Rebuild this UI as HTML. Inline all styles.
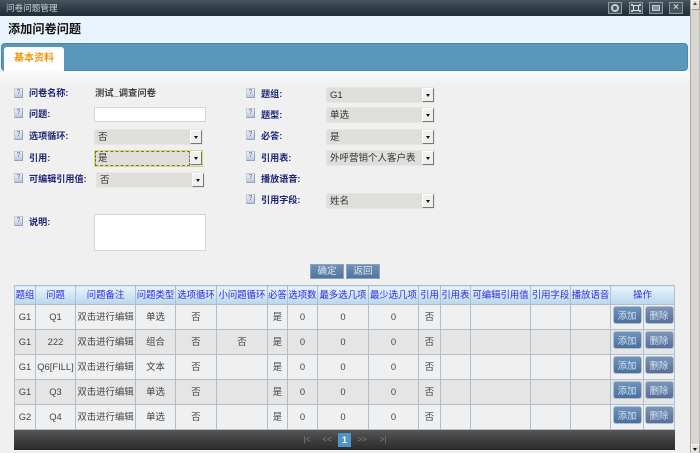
<!DOCTYPE html>
<html lang="zh"><head><meta charset="utf-8"><title>问卷问题管理</title>
<style>
html,body{margin:0;padding:0;width:700px;height:453px;overflow:hidden;background:#f0f0f0;font-family:"Liberation Sans","Noto Sans CJK SC",sans-serif}
body{filter:blur(.35px)}
div,span,b{position:absolute;box-sizing:border-box;white-space:nowrap}
#title{left:0;top:0;width:690px;height:16px;background:linear-gradient(#46555f,#2c3a43 60%,#222d34);color:#c9d2d8;font-size:8.6px;line-height:17px;padding-left:6px}
.wb{top:2px;width:14px;height:12px;border:1px solid #8c989f;background:#46545d}
.wb i{position:absolute;display:block;box-sizing:border-box}
#head{left:0;top:16px;width:690px;height:27px;background:#e9f4ff;color:#111;font-size:12.2px;font-weight:bold;line-height:27px;padding-left:8px}
#tabbar{left:1px;top:43px;width:687px;height:28px;background:#5a98bb;border:1px solid #4c86ad;border-radius:4px}
#tab{left:4px;top:47px;width:60px;height:24px;background:#fff;border-radius:3px 3px 0 0;color:#f0960f;font-size:10px;font-weight:bold;line-height:23px;text-align:center}
#fade{left:0;top:71px;width:690px;height:14px;background:linear-gradient(#fafafa,#f0f0f0)}
.ic{width:9px;height:10px;background:linear-gradient(#eef2f9,#bcc8dc);border:1px solid #c3cad6;border-right-color:#98a3b5;border-bottom-color:#98a3b5;color:#5565a5;font-size:7px;line-height:8px;text-align:center}
.lb{color:#1d2676;font-size:9.1px;font-weight:bold;line-height:12px}
.val{color:#444;font-size:9.3px;font-weight:bold;line-height:12px}
.in{background:#fff;border:1px solid #d6d6d6}
.sel{width:109px;height:16px;background:#dfdeda;border:1px solid #e6e6e4;color:#333;font-size:9.5px;line-height:15px;padding-left:3px}
.sel u{position:absolute;box-sizing:border-box;right:0;top:0;width:12px;height:14px;background:#efefec;border:1px solid #fff;border-right-color:#777;border-bottom-color:#777;text-decoration:none}
.sel u:after{content:"";position:absolute;left:3px;top:5px;border:2.5px solid transparent;border-top:3px solid #111;border-bottom:0}
.foc{height:17px;border:1px solid #dcd973}
.foc i{position:absolute;left:0;top:0;right:12px;bottom:0;border:1px dashed #77763a}
.btn{top:264px;height:15px;background:linear-gradient(#6f8fb4,#4f759f);border:1px solid #8ea3b8;color:#dfe8f2;font-size:9.5px;line-height:14px;text-align:center}
table{position:absolute;left:14px;top:285px;width:660px;border-collapse:collapse;table-layout:fixed;font-size:9.4px;color:#444}
td,th{border:1px solid #aebfcd;padding:0;text-align:center;white-space:nowrap;overflow:hidden;line-height:12px}
th{height:18px;background:linear-gradient(#e9f4fc,#bcd6ea);color:#2b2be6;font-weight:normal}
td{height:24px;background:#f0f0f0}
td.o{vertical-align:top}
tr.e td{background:#e5e5e5}
.a{position:relative;display:inline-block;width:29px;height:18px;top:0;margin-top:1px;background:linear-gradient(#6f94bd,#496f9f);border:1px solid #b5bfc9;border-radius:3px;color:#d8e4ef;font-size:9.4px;line-height:17px;vertical-align:top}
.d{background:linear-gradient(#7d95b8,#566f9b)}
#foot{left:14px;top:430px;width:661px;height:20px;background:linear-gradient(#555,#2a2a2a)}
.pg{top:433px;color:#80858a;font-size:8px;line-height:14px;text-align:center}
#scroll{left:690px;top:0;width:10px;height:453px;background:#d6d3cc;border-left:1px solid #aaa8a2}
.sb{left:0;width:9px;height:10px;background:#e4e2dc;border:1px solid #f5f5f2;border-right-color:#999;border-bottom-color:#999}
.sb i{position:absolute;left:1px;border:2.5px solid transparent}
#thumb{left:0;top:10px;width:9px;height:435px;background:#d9d6cf;border-right:1px solid #bbb}
</style></head><body>
<div id="title">问卷问题管理</div>
<div class="wb" style="left:608px"><i style="left:2px;top:1px;width:8px;height:8px;border:2px solid #c5ccd1;border-radius:50%"></i></div>
<div class="wb" style="left:629px"><i style="left:3px;top:2px;width:6px;height:6px;border:1px solid #dde2e5"></i><i style="left:1px;top:1px;width:2px;height:2px;background:#c5ccd1"></i><i style="right:1px;top:1px;width:2px;height:2px;background:#c5ccd1"></i><i style="left:1px;bottom:1px;width:2px;height:2px;background:#c5ccd1"></i><i style="right:1px;bottom:1px;width:2px;height:2px;background:#c5ccd1"></i></div>
<div class="wb" style="left:649px"><i style="left:2px;top:2px;width:8px;height:6px;background:#6f9bb8;border:1px solid #c0c8ce"></i></div>
<div class="wb" style="left:669px;color:#c5ccd1;font-size:10px;font-weight:bold;line-height:10px;text-align:center">×</div>
<div id="head">添加问卷问题</div>
<div id="tabbar"></div><div id="tab">基本资料</div><div id="fade"></div>

<div class="ic" style="left:14px;top:88px">?</div><div class="lb" style="left:29px;top:87px">问卷名称:</div><div class="val" style="left:95px;top:87px">测试_调查问卷</div>
<div class="ic" style="left:14px;top:108px">?</div><div class="lb" style="left:29px;top:108px">问题:</div><div class="in" style="left:94px;top:107px;width:112px;height:15px"></div>
<div class="ic" style="left:14px;top:130px">?</div><div class="lb" style="left:29px;top:130px">选项循环:</div><div class="sel" style="left:94px;top:129px">否<u></u></div>
<div class="ic" style="left:14px;top:151px">?</div><div class="lb" style="left:29px;top:152px">引用:</div><div class="sel foc" style="left:94px;top:150px">是<i></i><u></u></div>
<div class="ic" style="left:14px;top:173px">?</div><div class="lb" style="left:29px;top:173px">可编辑引用值:</div><div class="sel" style="left:96px;top:172px">否<u></u></div>
<div class="ic" style="left:14px;top:216px">?</div><div class="lb" style="left:29px;top:216px">说明:</div><div class="in" style="left:94px;top:214px;width:112px;height:37px"></div>

<div class="ic" style="left:246px;top:88px">?</div><div class="lb" style="left:261px;top:88px">题组:</div><div class="sel" style="left:326px;top:87px">G1<u></u></div>
<div class="ic" style="left:246px;top:108px">?</div><div class="lb" style="left:261px;top:109px">题型:</div><div class="sel" style="left:326px;top:107px">单选<u></u></div>
<div class="ic" style="left:246px;top:130px">?</div><div class="lb" style="left:261px;top:130px">必答:</div><div class="sel" style="left:326px;top:129px">是<u></u></div>
<div class="ic" style="left:246px;top:151px">?</div><div class="lb" style="left:261px;top:152px">引用表:</div><div class="sel" style="left:326px;top:150px">外呼营销个人客户表<u></u></div>
<div class="ic" style="left:246px;top:173px">?</div><div class="lb" style="left:261px;top:173px">播放语音:</div>
<div class="ic" style="left:246px;top:194px">?</div><div class="lb" style="left:261px;top:194px">引用字段:</div><div class="sel" style="left:326px;top:193px">姓名<u></u></div>

<div class="btn" style="left:310px;width:34px">确定</div>
<div class="btn" style="left:346px;width:34px">返回</div>

<table>
<colgroup><col style="width:21px"><col style="width:40px"><col style="width:60px"><col style="width:40px"><col style="width:41px"><col style="width:51px"><col style="width:20px"><col style="width:30px"><col style="width:51px"><col style="width:50px"><col style="width:22px"><col style="width:30px"><col style="width:60px"><col style="width:40px"><col style="width:40px"><col style="width:33px"><col style="width:31px"></colgroup>
<tr><th>题组</th><th>问题</th><th>问题备注</th><th>问题类型</th><th>选项循环</th><th>小问题循环</th><th>必答</th><th>选项数</th><th>最多选几项</th><th>最少选几项</th><th>引用</th><th>引用表</th><th>可编辑引用值</th><th>引用字段</th><th>播放语音</th><th colspan="2">操作</th></tr>
<tr><td>G1</td><td>Q1</td><td>双击进行编辑</td><td>单选</td><td>否</td><td></td><td>是</td><td>0</td><td>0</td><td>0</td><td>否</td><td></td><td></td><td></td><td></td><td class="o"><span class="a">添加</span></td><td class="o"><span class="a d">删除</span></td></tr>
<tr class="e"><td>G1</td><td>222</td><td>双击进行编辑</td><td>组合</td><td>否</td><td>否</td><td>是</td><td>0</td><td>0</td><td>0</td><td>否</td><td></td><td></td><td></td><td></td><td class="o"><span class="a">添加</span></td><td class="o"><span class="a d">删除</span></td></tr>
<tr><td>G1</td><td>Q6[FILL]</td><td>双击进行编辑</td><td>文本</td><td>否</td><td></td><td>是</td><td>0</td><td>0</td><td>0</td><td>否</td><td></td><td></td><td></td><td></td><td class="o"><span class="a">添加</span></td><td class="o"><span class="a d">删除</span></td></tr>
<tr class="e"><td>G1</td><td>Q3</td><td>双击进行编辑</td><td>单选</td><td>否</td><td></td><td>是</td><td>0</td><td>0</td><td>0</td><td>否</td><td></td><td></td><td></td><td></td><td class="o"><span class="a">添加</span></td><td class="o"><span class="a d">删除</span></td></tr>
<tr><td>G2</td><td>Q4</td><td>双击进行编辑</td><td>单选</td><td>否</td><td></td><td>是</td><td>0</td><td>0</td><td>0</td><td>否</td><td></td><td></td><td></td><td></td><td class="o"><span class="a">添加</span></td><td class="o"><span class="a d">删除</span></td></tr>
</table>

<div id="foot"></div>
<div class="pg" style="left:300px;width:14px">|&lt;</div>
<div class="pg" style="left:320px;width:14px">&lt;&lt;</div>
<div class="pg" style="left:338px;width:13px;height:14px;background:#4f96c8;color:#fff;font-size:9px;font-weight:bold">1</div>
<div class="pg" style="left:355px;width:14px">&gt;&gt;</div>
<div class="pg" style="left:376px;width:14px">&gt;|</div>

<div id="scroll"><div id="thumb"></div><div class="sb" style="top:0"><i style="top:1px;border-bottom:3px solid #555;border-top:0"></i></div><div class="sb" style="top:444px"><i style="top:3px;border-top:3px solid #111;border-bottom:0"></i></div></div>
</body></html>
